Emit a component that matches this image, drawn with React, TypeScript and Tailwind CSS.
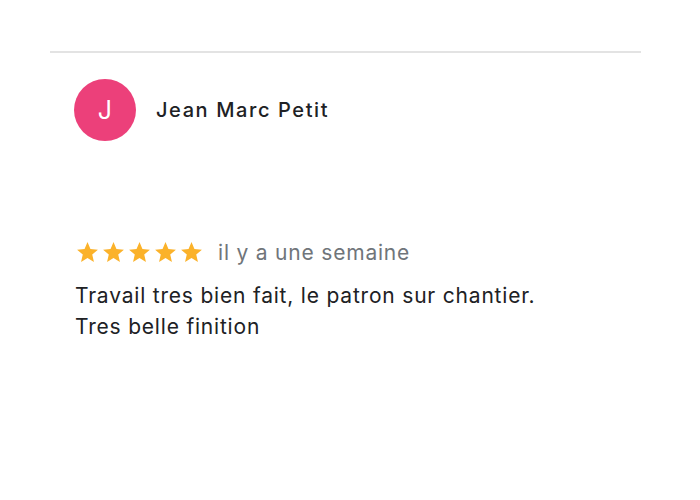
import React from "react"

const Star = () => (
  <svg viewBox="0 0 24 24" className="w-[25px] h-[25px] shrink-0" fill="#fbb22a" aria-hidden="true">
    <path d="M12 17.27 18.18 21l-1.64-7.03L22 9.24l-7.19-.61L12 2 9.19 8.63 2 9.24l5.46 4.73L5.82 21z" />
  </svg>
)

export default function App() {
  return (
    <div className="w-[700px] h-[500px] bg-white font-['Inter',sans-serif] pt-[51px] px-[50px]">
      <div className="border-t-2 border-[#e3e3e3] w-[591px]" />

      {/* Reviewer */}
      <div className="flex items-center gap-[20px] pl-[24px] pt-[26px]">
        <div className="w-[62px] h-[62px] rounded-full bg-[#ec407a] flex items-center justify-center text-white text-[25px] leading-none">
          J
        </div>
        <span className="text-[20px] font-medium text-[#202124] tracking-[1.6px]">Jean Marc Petit</span>
      </div>

      {/* Rating */}
      <div className="flex items-center pl-[25px] mt-[99px]">
        <div className="flex gap-[1px]">
          <Star />
          <Star />
          <Star />
          <Star />
          <Star />
        </div>
        <span className="ml-[14px] text-[21px] text-[#70757a] leading-none tracking-[0.8px]">il y a une semaine</span>
      </div>

      {/* Review text */}
      <p className="pl-[25px] mt-[15px] text-[21px] leading-[31px] text-[#202124] tracking-[0.8px]">
        Travail tres bien fait, le patron sur chantier.
        <br />
        Tres belle finition
      </p>
    </div>
  )
}
